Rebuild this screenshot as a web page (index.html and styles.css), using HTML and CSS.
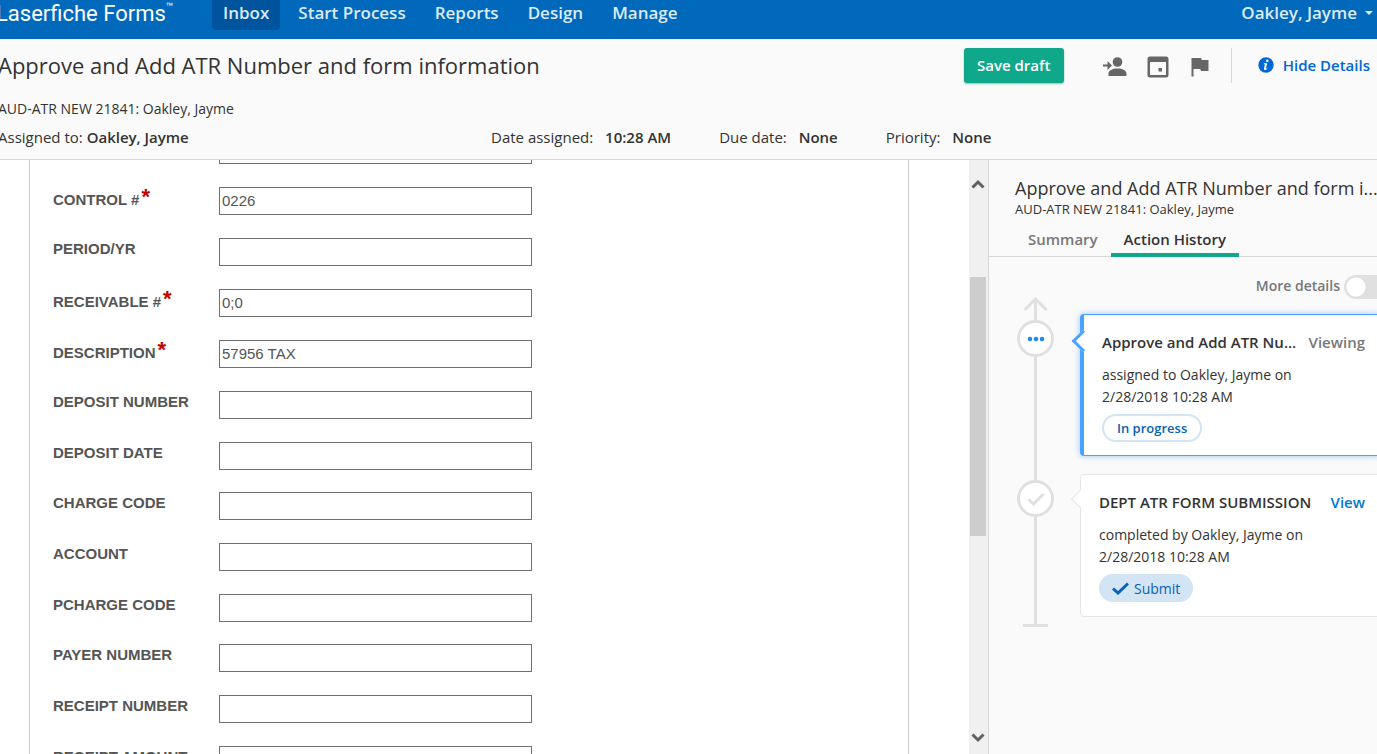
FILE: index.html
```
<!DOCTYPE html>
<html lang="en">
<head>
<meta charset="utf-8">
<title>Laserfiche Forms</title>
<link rel="stylesheet" href="styles.css">
</head>
<body>
<nav class="topbar">
  <div class="brand">Laserfiche Forms<span class="tm">™</span></div>
  <div class="menu">
    <a href="#" class="current">Inbox</a>
    <a href="#">Start Process</a>
    <a href="#">Reports</a>
    <a href="#">Design</a>
    <a href="#">Manage</a>
  </div>
  <button class="user" type="button">Oakley, Jayme <span class="caret"></span></button>
</nav>

<header class="task">
  <div class="task-head">
    <h1>Approve and Add ATR Number and form information</h1>
    <button class="save" type="button">Save draft</button>
    <div class="tools">
      <button type="button" aria-label="Reassign"><svg width="24" height="22" viewBox="1 0 24 22"><circle cx="15.500" cy="6" r="4.800"/><path d="M6.500 20v-2.500c0-3 4-5 9-5s9 2 9 5V20zM1 8.500h4.500V5L10 9.500 5.500 14v-3.500H1z"/></svg></button>
      <button type="button" aria-label="Due date"><svg width="22" height="22" viewBox="0 0 22 22"><path fill-rule="evenodd" d="M3 .5h16q2.500 0 2.500 2.500v16q0 2.500-2.500 2.500H3Q.5 21.500.5 19V3Q.5.5 3 .5zM3 6v13h16V6zm8.500 6h3.500v3.500h-3.500z"/></svg></button>
      <button type="button" aria-label="Priority"><svg width="20" height="20" viewBox="-2 0 20 20"><path d="M.5 1H10l.8 2H17.500v11H10l-.8-2H2.500v7.500h-2z"/></svg></button>
    </div>
    <button class="details" type="button"><svg width="16" height="16" viewBox="0 0 16 16"><circle cx="8" cy="8" r="7.700" fill="#0068d6"/><circle cx="9.300" cy="3.800" r="1.300" fill="#fff"/><path d="M6 6.200h3.200L8 11.200q-.1.700.4.500l1-.6-.3 1Q8 13.200 6.800 13q-1.200-.3-.8-1.700L7 7.300H5.800z" fill="#fff"/></svg>Hide Details</button>
  </div>
  <p class="instance">AUD-ATR NEW 21841: Oakley, Jayme</p>
  <div class="facts">
    <span class="assignee">Assigned to: <b>Oakley, Jayme</b></span>
    <span>Date assigned: <b>10:28 AM</b></span>
    <span>Due date: <b>None</b></span>
    <span>Priority: <b>None</b></span>
  </div>
</header>

<div class="workspace">
  <main class="viewport">
    <form class="sheet">
      <div class="field"><label for="f0"></label><input id="f0" type="text" aria-label="Previous field"></div>
      <div class="field required"><label for="f1">CONTROL #<span class="star">*</span></label><input id="f1" type="text" value="0226"></div>
      <div class="field"><label for="f2">PERIOD/YR</label><input id="f2" type="text"></div>
      <div class="field required"><label for="f3">RECEIVABLE #<span class="star">*</span></label><input id="f3" type="text" value="0;0"></div>
      <div class="field required"><label for="f4">DESCRIPTION<span class="star">*</span></label><input id="f4" type="text" value="57956 TAX"></div>
      <div class="field"><label for="f5">DEPOSIT NUMBER</label><input id="f5" type="text"></div>
      <div class="field"><label for="f6">DEPOSIT DATE</label><input id="f6" type="text"></div>
      <div class="field"><label for="f7">CHARGE CODE</label><input id="f7" type="text"></div>
      <div class="field"><label for="f8">ACCOUNT</label><input id="f8" type="text"></div>
      <div class="field"><label for="f9">PCHARGE CODE</label><input id="f9" type="text"></div>
      <div class="field"><label for="f10">PAYER NUMBER</label><input id="f10" type="text"></div>
      <div class="field"><label for="f11">RECEIPT NUMBER</label><input id="f11" type="text"></div>
      <div class="field"><label for="f12">RECEIPT AMOUNT</label><input id="f12" type="text"></div>
    </form>
  </main>
  <div class="scrollbar">
    <svg width="14" height="11" viewBox="0 0 14 11"><path d="M1.500 9.500 7 4l5.500 5.500" fill="none" stroke="#606060" stroke-width="3"/></svg>
    <div class="track"><div class="thumb"></div></div>
    <svg width="14" height="11" viewBox="0 0 14 11"><path d="M1.500 2.500 7 8l5.500-5.500" fill="none" stroke="#606060" stroke-width="3"/></svg>
  </div>
  <aside class="panel">
    <h2>Approve and Add ATR Number and form i...</h2>
    <p class="panel-sub">AUD-ATR NEW 21841: Oakley, Jayme</p>
    <div class="tabs">
      <button type="button">Summary</button>
      <button type="button" class="active">Action History</button>
    </div>
    <label class="more"><span>More details</span> <input type="checkbox" role="switch"></label>
    <div class="timeline">
      <svg class="arrow" width="25" height="24" viewBox="0 0 25 24"><path d="M1.500 13 12.500 2l11 11M12.500 2v22" fill="none" stroke="#e0e0e0" stroke-width="3"/></svg>
      <div class="step">
        <div class="node"><svg width="18" height="6" viewBox="0 0 18 6" fill="#1a8cf0"><circle cx="3" cy="3" r="2.300"/><circle cx="9" cy="3" r="2.300"/><circle cx="15" cy="3" r="2.300"/></svg></div>
        <article class="card selected">
          <div class="card-head"><h3>Approve and Add ATR Nu...</h3><span class="viewing">Viewing</span></div>
          <p>assigned to Oakley, Jayme on<br>2/28/2018 10:28 AM</p>
          <span class="pill outline">In progress</span>
        </article>
      </div>
      <div class="step">
        <div class="node"><svg width="18" height="14" viewBox="0 0 18 14"><path d="M1.500 7.500 6.500 12 16.500 2" fill="none" stroke="#e0e0e0" stroke-width="3"/></svg></div>
        <article class="card">
          <div class="card-head"><h3>DEPT ATR FORM SUBMISSION</h3><a href="#">View</a></div>
          <p>completed by Oakley, Jayme on<br>2/28/2018 10:28 AM</p>
          <span class="pill solid"><svg width="17" height="13" viewBox="0 0 17 13"><path d="M1 6.500 6 11 16 1.500" fill="none" stroke="#0562b5" stroke-width="3"/></svg>Submit</span>
        </article>
      </div>
      <div class="base"></div>
    </div>
  </aside>
</div>
</body>
</html>
```
FILE: styles.css
```
* { box-sizing: border-box; }
body {
  margin: 0;
  height: 100vh;
  display: flex;
  flex-direction: column;
  overflow: hidden;
  background: #fafafa;
  color: #333;
  font-family: "Open Sans", "Noto Sans", sans-serif;
  font-size: 15px;
}
h1, h2, h3, p { margin: 0; font-weight: 400; }
b { font-weight: 600; }
a { text-decoration: none; }
svg { display: block; }
button {
  border: 0;
  padding: 0;
  background: none;
  color: inherit;
  font: inherit;
  white-space: nowrap;
}

/* Top navigation */
.topbar {
  flex: none;
  height: 39px;
  display: flex;
  align-items: flex-start;
  background: #0069bc;
  color: #dcebf8;
  font-size: 17px;
  font-weight: 600;
  line-height: 26px;
}
.brand {
  position: relative;
  width: 214px;
  margin-left: -4px;
  color: #fff;
  font-family: Roboto, sans-serif;
  font-size: 22px;
  font-weight: 400;
  line-height: 28px;
  white-space: nowrap;
}
.tm {
  position: absolute;
  top: 0;
  font-size: 12px;
  line-height: 14px;
}
.menu { flex: 1; display: flex; gap: 7px; margin-left: 2px; }
.menu a {
  height: 30px;
  padding: 0 11px;
  border-radius: 0 0 4px 4px;
  color: inherit;
}
.menu .current { background: #00549e; }
.user { display: flex; align-items: center; gap: 8px; margin-right: 4px; }
.caret { border: 4px solid transparent; border-top-color: #dcebf8; border-bottom: 0; }

/* Task header */
.task {
  flex: none;
  height: 121px;
  border-bottom: 1px solid #d8d8d8;
  overflow: hidden;
}
.task-head { display: flex; align-items: center; padding: 9px 7px 0 0; }
h1 { flex: 1; margin-left: -2px; font-size: 22px; line-height: 35px; white-space: nowrap; }
.save {
  width: 100px;
  height: 35px;
  padding-bottom: 2px;
  border-radius: 3px;
  background: #0fa88b;
  box-shadow: 0 1px 2px #9bb;
  color: #fff;
  font-weight: 600;
}
.tools { display: flex; align-items: center; gap: 20px; padding: 3px 22px 0 39px; }
.tools svg { fill: #666; }
.details {
  display: flex;
  align-items: center;
  gap: 9px;
  height: 35px;
  padding: 0 0 2px 26px;
  border-left: 1px solid #d8d8d8;
  color: #0068d6;
  font-weight: 600;
}
.instance { margin: 16px 0 0 -2px; font-size: 14px; line-height: 20px; }
.facts { display: flex; gap: 48px; margin: 7px 0 0 -2px; line-height: 22px; white-space: nowrap; }
.facts b { margin-left: 8px; }
.assignee { width: 445px; }
.facts .assignee b { margin-left: 0; }

/* Form */
.workspace { flex: 1; min-height: 0; display: flex; }
.viewport { flex: 1; overflow: hidden; background: #fff; }
.sheet {
  margin: -24px 60px 0 29px;
  padding-left: 23px;
  border: 1px solid #ccc;
  border-width: 0 1px;
  color: #555;
  font-family: "Liberation Sans", Arial, sans-serif;
}
.field { height: 51px; display: flex; align-items: flex-start; }
.field:nth-child(n+6):nth-child(3n+1) { height: 50px; }
.field label { width: 166px; padding-top: 2px; font-weight: 700; line-height: 18px; white-space: nowrap; }
.field.required label { padding-top: 4px; }
.star { margin-left: 2px; color: #c00000; font-size: 22px; line-height: 1px; vertical-align: 1px; }
.field input {
  width: 313px;
  height: 28px;
  padding: 0 2px 2px;
  border: 1px solid #707070;
  border-radius: 0;
  background: #fff;
  color: #555;
  font: inherit;
}

/* Scroll bar */
.scrollbar {
  width: 19px;
  display: flex;
  flex-direction: column;
  align-items: center;
  padding: 18px 2px 11px 1px;
  background: #f0f0f0;
}
.track { flex: 1; width: 16px; padding-top: 88px; }
.thumb { height: 57%; min-height: 40px; background: #cdcdcd; }

/* Details panel */
.panel {
  flex: 0 0 389px;
  min-width: 0;
  border-left: 1px solid #d8d8d8;
  overflow: hidden;
}
.panel h2 {
  margin: 15px 0 0 26px;
  font-size: 18px;
  line-height: 26px;
  white-space: nowrap;
}
.panel-sub { margin-left: 26px; font-size: 13px; line-height: 17px; }
.tabs { display: flex; height: 39px; padding-left: 26px; border-bottom: 1px solid #d8d8d8; }
.tabs button {
  height: 39px;
  padding: 6px 13px 0;
  border-bottom: 4px solid transparent;
  color: #777;
  font-weight: 600;
}
.tabs .active { border-color: #0fa88b; color: #333; }
.more {
  display: flex;
  align-items: center;
  justify-content: flex-end;
  gap: 4px;
  height: 24px;
  margin: 18px -12px 0 0;
  color: #777;
  font-size: 14px;
  font-weight: 600;
}
.more span { padding-bottom: 3px; }
.more input {
  appearance: none;
  width: 45px;
  height: 24px;
  margin: 0;
  border-radius: 12px;
  background: radial-gradient(circle at 12px 12px, #fff 9px, #e0e0e0 10px);
}
.timeline { position: relative; margin: -2px -4px 0 28px; }
.timeline::before {
  content: "";
  position: absolute;
  left: 17px;
  top: 20px;
  bottom: 0;
  width: 3px;
  background: #e0e0e0;
}
.arrow { position: relative; margin: 0 0 -7px 6px; }
.step { position: relative; display: flex; align-items: flex-start; gap: 26px; margin-bottom: 18px; }
.node {
  flex: none;
  width: 37px;
  height: 37px;
  margin-top: 6px;
  display: grid;
  place-items: center;
  border: 3px solid #e0e0e0;
  border-radius: 50%;
  background: #fff;
}
.card {
  position: relative;
  flex: 1;
  min-width: 0;
  padding: 16px 15px 14px 18px;
  border: 1px solid #e5e5e5;
  border-radius: 4px;
  background: #fff;
}
.card::before {
  content: "";
  position: absolute;
  left: -7px;
  top: 17px;
  width: 13px;
  height: 13px;
  border: 1px solid #e5e5e5;
  border-width: 0 0 1px 1px;
  background: #fff;
  transform: rotate(45deg);
}
.card.selected {
  padding-bottom: 13px;
  border-color: #47a3ff;
  border-left-width: 4px;
  box-shadow: 0 0 6px #9cc4f5;
}
.card.selected::before { border-width: 0 0 3px 3px; border-color: #47a3ff; left: -9px; top: 18px; }
.card-head { display: flex; justify-content: space-between; gap: 5px; line-height: 22px; font-weight: 600; }
.card-head a { color: #0078d7; }
.card h3 { font-size: 15px; font-weight: 600; white-space: nowrap; }
.viewing { color: #777; }
.card p { margin: 11px 0 6px; font-size: 14px; line-height: 22px; }
.pill {
  display: flex;
  width: max-content;
  height: 28px;
  align-items: center;
  gap: 5px;
  padding: 0 13px;
  border-radius: 14px;
  color: #0562b5;
}
.outline { border: 2px solid #d3e4f5; font-size: 13px; font-weight: 600; }
.solid { background: #d3e4f5; font-size: 14px; }
.base { width: 25px; height: 3px; margin: -11px 0 0 6px; background: #e0e0e0; }
```
